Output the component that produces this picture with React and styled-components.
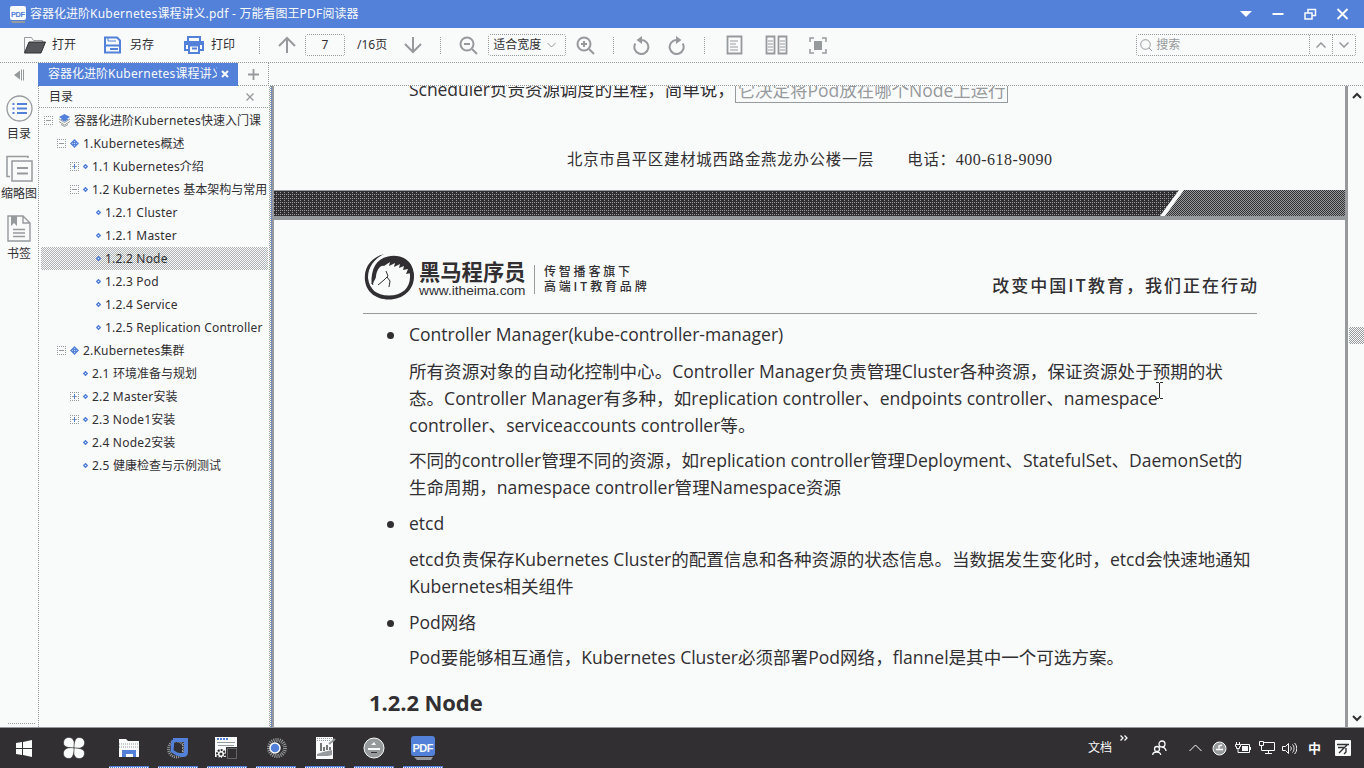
import React from "react";
import styled, { createGlobalStyle, css } from "styled-components";

const C = { bg: "#f9fbfa", ink: "#312f32", gray: "#979a9d", blue: "#5380d8" };
const dotsX = `repeating-linear-gradient(90deg, ${C.gray} 0 1px, transparent 1px 2px)`;
const dotsY = `repeating-linear-gradient(180deg, ${C.gray} 0 1px, transparent 1px 2px)`;
const checker = (a, b) => `repeating-conic-gradient(${a} 0 25%, ${b} 0 50%) 0 0 / 2px 2px`;

const Global = createGlobalStyle`
  * { box-sizing: border-box; }
  body { margin: 0; background: ${C.bg}; color: ${C.ink}; font: 12px/16px "Noto Sans", "Noto Sans CJK SC", sans-serif; overflow: hidden; }
  svg { display: block; flex: none; }
`;
const Window = styled.div`width: 1364px; height: 768px; display: flex; flex-direction: column; background: ${C.bg}; white-space: nowrap; overflow: hidden;`;
const TitleBar = styled.header`height: 28px; flex: none; display: flex; align-items: center; background: ${C.blue}; color: ${C.bg}; padding: 0 13px 0 9px;`;
const Title = styled.span`margin-left: 4px; flex: 1;`;
const WindowButtons = styled.div`display: flex; gap: 16px;`;
const Toolbar = styled.div`height: 35px; flex: none; display: flex; align-items: center; padding: 0 8px 1px 23px; background: ${dotsX} 0 34px / 100% 1px no-repeat;`;
const ToolButton = styled.div`display: flex; align-items: center; gap: ${p => p.$gap || 6}px; width: ${p => p.$w}px; flex: none;`;
const Separator = styled.i`width: 1px; height: 17px; background: ${dotsY}; margin: 0 ${p => p.$r}px 0 ${p => p.$l}px; flex: none;`;
const Field = styled.div`height: 22px; width: ${p => p.$w}px; flex: none; display: flex; align-items: center; border-radius: 3px; background: ${dotsX} 0 0 / 100% 1px no-repeat, ${dotsX} 0 100% / 100% 1px no-repeat, ${dotsY} 0 0 / 1px 100% no-repeat, ${dotsY} 100% 0 / 1px 100% no-repeat; ${p => p.$center && css`justify-content: center;`} padding: 0 ${p => p.$pad || 1}px; margin-left: ${p => p.$ml || 0}px;`;
const Gap = styled.i`width: ${p => p.$w}px; flex: none;`;
const Placeholder = styled.span`color: ${C.gray}; margin-left: 4px; flex: 1;`;
const Stepper = styled.div`height: 20px; width: 23px; display: grid; place-items: center; background: ${dotsY} 0 0 / 1px 100% no-repeat;`;
const TabRow = styled.div`height: 23px; flex: none; display: flex; background: ${dotsX} 0 22px / 100% 1px no-repeat;`;
const Collapse = styled.div`width: 38px; display: grid; place-items: center; background: ${C.bg};`;
const Tab = styled.div`width: 200px; background: ${C.blue}; color: ${C.bg}; display: flex; align-items: center; padding: 0 9px 2px 10px; justify-content: space-between;`;
const TabText = styled.span`width: 169px; overflow: hidden;`;
const NewTab = styled.div`width: 31px; display: grid; place-items: center; padding-bottom: 1px; background: ${dotsY} 30px 0 / 1px 100% no-repeat;`;
const Body = styled.main`height: 641px; flex: none; display: flex;`;
const Rail = styled.nav`width: 39px; flex: none; background: ${dotsY} 38px 0 / 1px 100% no-repeat; display: flex; flex-direction: column; align-items: flex-start; padding-top: 9px;`;
const RailItem = styled.div`width: 38px; height: 60px; display: flex; flex-direction: column; align-items: center; gap: 4px; span { line-height: 16px; }`;
const RailGrip = styled.i`width: 27px; height: 1px; margin: auto 0 3px 8px; background: ${dotsX};`;
const Outline = styled.aside`width: 230px; flex: none; display: flex; flex-direction: column;`;
const OutlineHead = styled.div`height: 23px; flex: none; display: flex; align-items: center; justify-content: space-between; padding: 0 15px 2px 10px; background: ${dotsX} 0 21px / 100% 1px no-repeat;`;
const TreeRow = styled.div`height: 23px; display: flex; align-items: center; padding-left: ${p => p.$indent}px; margin: 0 1px 0 2px; overflow: hidden; ${p => p.$on && css`background: ${checker("#aeb1b3", C.bg)};`}`;
const TreeBox = styled.svg`margin-right: ${p => p.$r}px;`;
const TreeText = styled.span`margin-left: ${p => p.$ml}px;`;
const Latin = styled.span`letter-spacing: ${p => p.$ls}px;`;
const Splitter = styled.i`width: 5px; flex: none; background: linear-gradient(90deg, transparent 3px, ${C.gray} 3px), repeating-linear-gradient(180deg, ${C.blue} 0 1px, ${C.gray} 1px 2px) 2px 0 / 1px 100% no-repeat, ${checker(C.gray, C.bg)};`;
const Viewer = styled.section`width: 1071px; flex: none; height: 641px; overflow: hidden; display: flex; flex-direction: column;`;
const PageEnd = styled.div`height: 130px; flex: none; overflow: hidden;`;
const PageNext = styled.article`border-top: 4px solid ${C.gray}; flex: 1; overflow: hidden; padding-left: 89px;`;
const docFont = css`font: 17.56px/27px "Open Sans", "Noto Sans CJK SC", sans-serif;`;
const ClippedLine = styled.div`${docFont} height: 27px; margin: -10px 0 0 135px; display: flex; letter-spacing: -.07px;`;
const Quote = styled.span`border: 1px solid ${C.gray}; color: ${C.gray}; padding: 0 2px; width: 273px; height: 27px; line-height: 26px;`;
const Address = styled.div`font: 15.4px/20px "Liberation Serif", "Noto Sans CJK SC", serif; margin: 47px 0 0 293px; display: flex; gap: 33px; letter-spacing: .78px;`;
const Phone = styled.span`letter-spacing: .5px; font-size: 16px;`;
const Band = styled.svg`margin-top: 20px;`;
const DocHeader = styled.header`width: 894px; height: 94px; border-bottom: 1px solid ${C.gray}; display: flex; padding: 33px 0 0 1px;`;
const Brand = styled.div`margin-left: 4px; width: 116px; border-right: 1px solid ${C.gray}; height: 29px; margin-top: 12px;`;
const BrandName = styled.div`font: bold 21.3px/22px "Noto Sans CJK SC", sans-serif; margin-top: -5px;`;
const BrandUrl = styled.div`font: 13.7px/14px "Liberation Sans", sans-serif; margin-top: 2px;`;
const BrandNote = styled.div`font: 500 12px/15px "Noto Sans CJK SC", sans-serif; margin: 10px 0 0 9px; flex: 1; letter-spacing: 2.8px;`;
const Slogan = styled.div`font: 500 17px/24px "Noto Sans CJK SC", sans-serif; letter-spacing: 2px; margin: 20px -2px 0 0;`;
const Block = styled.div`${docFont} margin: ${p => p.$mt}px 0 0 46px; position: relative;`;
const Bullet = styled.i`float: left; width: 7px; height: 7px; border-radius: 50%; background: ${C.ink}; margin: 11px 0 0 -22px;`;
const Line = styled.div`height: 27px;`;
const Heading = styled.h2`font: bold 22px/30px "Open Sans", sans-serif; margin: 16px 0 0 6px; letter-spacing: -.08px;`;
const ScrollTrack = styled.div`width: 19px; border-left: 3px solid ${C.gray}; flex: none; display: flex; flex-direction: column; align-items: flex-end; padding: 6px 0 5px;`;
const ScrollThumb = styled.i`width: 15px; height: 17px; margin: 228px 0 auto; background: ${checker(C.gray, C.bg)};`;
const Taskbar = styled.footer`height: 41px; flex: none; border-top: 1px solid ${C.gray}; background: ${C.ink}; color: ${C.bg}; display: flex; align-items: stretch;`;
const Task = styled.div`width: 40px; margin-left: ${p => p.$ml}px; flex: none; display: grid; place-items: center; ${p => p.$open && css`background: ${dotsX.replace(C.gray, C.bg)} 0 100% / 100% 1px no-repeat, linear-gradient(${C.blue}, ${C.blue}) 0 100% / 100% 2px no-repeat;`}`;
const Tray = styled.div`display: flex; align-items: center; margin-left: auto; padding-right: 13px;`;
const TrayText = styled.span`margin-left: ${p => p.$ml || 0}px; font-size: ${p => p.$size || 12}px; font-weight: ${p => p.$bold ? 700 : 400};`;
const TrayIcon = styled.svg`margin-left: ${p => p.$ml}px; margin-top: ${p => p.$mt || 0}px;`;
const Cursor = styled.svg`position: absolute; left: 746px; top: 24px;`;
const IconText = styled.text`font-family: "Liberation Sans", sans-serif; font-weight: 700;`;

const S = ({ w, h, s = C.gray, sw = 1, f = "none", children }) => (
  <svg width={w} height={h} viewBox={`0 0 ${w} ${h}`} fill={f} stroke={s} strokeWidth={sw}>{children}</svg>
);
const Mixed = ({ text, ls }) => text.split(/([ -~]+)/).map((t, i) => (i % 2 ? <Latin key={i} $ls={ls}>{t}</Latin> : t));

const ZoomIcon = ({ plus }) => (
  <S w={19} h={19} sw={2}><circle cx="8" cy="8" r="6.500" /><path d="M13 13l5 5M5 8h6" />{plus && <path d="M8 5v6" />}</S>
);
const RotateIcon = ({ flip }) => (
  <S w={17} h={19} sw={2}><g transform={flip ? "matrix(-1 0 0 1 17 0)" : undefined}><path d="M2.300 7.500A7 7 0 1 0 8.500 4H6" /><path d="M9 0v8L3.500 4z" fill={C.gray} stroke="none" /></g></S>
);

const ROWS = [
  [0, "-", "容器化进阶Kubernetes快速入门课"], [1, "-", "1.Kubernetes概述"], [2, "+", "1.1 Kubernetes介绍"],
  [2, "-", "1.2 Kubernetes 基本架构与常用"], [3, "", "1.2.1 Cluster"], [3, "", "1.2.1 Master"], [3, "", "1.2.2 Node", true],
  [3, "", "1.2.3 Pod"], [3, "", "1.2.4 Service"], [3, "", "1.2.5 Replication Controller"], [1, "-", "2.Kubernetes集群"],
  [2, "", "2.1 环境准备与规划"], [2, "+", "2.2 Master安装"], [2, "+", "2.3 Node1安装"], [2, "", "2.4 Node2安装"], [2, "", "2.5 健康检查与示例测试"],
];
const LEVEL = [{ box: 3, icon: 5, ml: 3 }, { box: 16, icon: 4, ml: 4 }, { box: 29, icon: 4, ml: 4 }, { box: 42, icon: 4, ml: 4 }];

function TreeItem({ row: [level, mark, text, on] }) {
  const l = LEVEL[level];
  return (
    <TreeRow $on={on} $indent={l.box}>
      <TreeBox width="9" height="9" $r={l.icon} fill="none" stroke={C.gray} shapeRendering="crispEdges">
        {mark && <><path d="M0 .5h9M0 8.500h9M.5 2v6M8.500 2v6" strokeDasharray="1 1" /><path d="M2 4.500h5" />{mark === "+" && <path d="M4.500 2v5" stroke={C.blue} />}</>}
      </TreeBox>
      {level === 0 && <S w={13} h={13} f={C.blue} s="none"><path d="M6.500 0L12 3 6.500 6.500 1 3z" /><path d="M1 5l5.500 3.500L12 5M1 7.500l5.500 3.500L12 7.500M3 10.500l3.500 2 3.500-2" fill="none" stroke={C.gray} /><path d="M3 5l3.500 2 3.500-2" stroke={C.blue} /></S>}
      {level === 1 && <S w={9} h={9} f={C.blue} s="none"><path d="M4.500 0L9 4.500 4.500 9 0 4.500z" /><path d="M4.500 2v5M2 4.500h5" stroke={C.bg} strokeWidth=".6" strokeDasharray="1 1" /></S>}
      {level > 1 && <S w={5} h={5} s={C.blue} sw={1.4}><path d="M2.500 .7l1.800 1.800-1.800 1.800L.7 2.500z" /></S>}
      <TreeText $ml={l.ml}><Mixed text={text} ls={0.2} /></TreeText>
    </TreeRow>
  );
}

const Doc = () => (
  <Viewer>
    <PageEnd>
      <ClippedLine>Scheduler负责资源调度的里程，简单说，<Quote>它决定将Pod放在哪个Node上运行</Quote></ClippedLine>
      <Address><span>北京市昌平区建材城西路金燕龙办公楼一层</span><span>电话：<Phone>400-618-9090</Phone></span></Address>
      <Band width="1071" height="26">
        <defs>
          <pattern id="dark" width="4" height="4" patternUnits="userSpaceOnUse"><path d="M0 0h4v4H0z" fill={C.ink} /><path d="M0 0h1v1H0zM2 2h1v1H2zM2 0h1v1H2z" fill={C.gray} /></pattern>
          <pattern id="mid" width="2" height="2" patternUnits="userSpaceOnUse"><path d="M0 0h2v2H0z" fill={C.gray} /><path d="M0 0h1v1H0zM1 1h1v1H1z" fill={C.ink} /></pattern>
        </defs>
        <path d="M0 0h905l-19 26H0z" fill="url(#dark)" /><path d="M0 .5h905" stroke={C.gray} />
        <path d="M910 0h161v26H891z" fill="url(#mid)" />
      </Band>
    </PageEnd>
    <PageNext>
      <DocHeader>
        <S w={51} h={48} s={C.ink}>
          <path d="M20 1C9 4 .8 12 .8 24.500 .8 38 11 46.500 25 46.500S50 37 50 23.500C50 18 48.500 14 46 11l-1 7c1 2 1 4 1 6 0 11-8 18.500-21 18.500S5.500 36 4 25C4 14 10 6 20 1z" fill={C.ink} stroke="none" />
          <path d="M7.500 31C7 16 12 6 24 3.500 35 1 45 6 48 14l2 9-3-3-5 1 2-5-5 1 1-4-5 2 1-4-6 3 1-4-6 3 1-4-6 4C16 12 13 17 12 23c0 3-2 4-3 8z" fill={C.ink} stroke="none" />
          <path d="M8 30l1 2M22 18l2 5-4 4-6 5M23 24l3 4-1 6" strokeWidth="1" />
        </S>
        <Brand><BrandName>黑马程序员</BrandName><BrandUrl>www.itheima.com</BrandUrl></Brand>
        <BrandNote>传智播客旗下<br />高端IT教育品牌</BrandNote>
        <Slogan>改变中国IT教育，我们正在行动</Slogan>
      </DocHeader>
      <Block $mt={7}><Bullet /><Line>Controller Manager(kube-controller-manager)</Line></Block>
      <Block $mt={10}>
        <Line>所有资源对象的自动化控制中心。Controller Manager负责管理Cluster各种资源，保证资源处于预期的状</Line>
        <Line>态。Controller Manager有多种，如replication controller、endpoints controller、namespace</Line>
        <Line>controller、serviceaccounts controller等。</Line>
        <Cursor width="9" height="17" stroke={C.ink}><path d="M1 .5h3M5 .5h3M4.500 1v15M1 16.500h3M5 16.500h3" /></Cursor>
      </Block>
      <Block $mt={8}>
        <Line>不同的controller管理不同的资源，如replication controller管理Deployment、StatefulSet、DaemonSet的</Line>
        <Line>生命周期，namespace controller管理Namespace资源</Line>
      </Block>
      <Block $mt={9}><Bullet /><Line>etcd</Line></Block>
      <Block $mt={9}>
        <Line>etcd负责保存Kubernetes Cluster的配置信息和各种资源的状态信息。当数据发生变化时，etcd会快速地通知</Line>
        <Line>Kubernetes相关组件</Line>
      </Block>
      <Block $mt={9}><Bullet /><Line>Pod网络</Line></Block>
      <Block $mt={8}><Line>Pod要能够相互通信，Kubernetes Cluster必须部署Pod网络，flannel是其中一个可选方案。</Line></Block>
      <Heading>1.2.2 Node</Heading>
    </PageNext>
  </Viewer>
);

const TaskIcons = [
  <S w={16} h={17} f={C.bg} s="none"><path d="M0 3l6-1v6H0zM7 2l9-2v8H7zM0 9h6v6l-6-1zM7 9h9v8l-9-2z" /></S>,
  <S w={22} h={22} f={C.bg} s={C.ink} sw={0.6}><path d="M11 11C7 11 .5 10.500 .5 6S4 0 7 .5c4 1 5 5.500 4 10.500z" /><path d="M11 11c0-4 .5-10.500 5-10.500S22 4 21.500 7c-1 4-5.500 5-10.500 4z" /><path d="M11 11c4 0 10.500 .5 10.500 5s-3.500 6-6.500 5.500c-4-1-5-5.500-4-10.500z" /><path d="M11 11c0 4-.5 10.500-5 10.500S0 18 .5 15c1-4 5.500-5 10.500-4z" /></S>,
  <S w={22} h={19} s="none"><path d="M1 0h7l2 2h11v16H1z" fill={C.bg} /><path d="M1 5h20M1 8h20" stroke={C.gray} strokeDasharray="1 1" /><path d="M4 11h14v7h-3v-3H8v3H4z" fill={C.blue} /></S>,
  <S w={23} h={22} s={C.gray}><circle cx="9.500" cy="12" r="8" strokeWidth="3" strokeDasharray="1 1" /><path d="M6 3l13 0v12q0 3-3 3h-3" stroke={C.blue} strokeWidth="4" /><path d="M6 3l-1 11 5 3 4 1" stroke={C.blue} strokeWidth="3" /><path d="M8 6l8 2v8l-6-2z" fill={C.ink} stroke="none" /><path d="M15.500 7v8" strokeDasharray="2 1" /></S>,
  <S w={24} h={23} s="none"><path d="M0 0h22v20H0z" fill={C.bg} /><path d="M2 2h11" stroke={C.blue} strokeWidth="2" strokeDasharray="2 1" /><path d="M2 5.500h18M3 8.500h16" stroke={C.gray} /><path d="M11 10h12v13H11z" fill={C.ink} /><path d="M12.500 11.500h9v10h-9z" stroke={C.gray} strokeDasharray="1 1" /><circle cx="6" cy="17" r="4" fill={C.bg} stroke={C.ink} strokeWidth="2" strokeDasharray="2 1" /><circle cx="6" cy="17" r="1.500" fill={C.ink} /></S>,
  <S w={22} h={22} s={C.gray}><circle cx="12" cy="11" r="8" strokeWidth="4" strokeDasharray="1 1" /><circle cx="10" cy="11" r="5" fill={C.blue} stroke={C.bg} strokeWidth="1.500" /></S>,
  <S w={21} h={24} s="none"><path d="M1 1h17v22H1z" fill={C.bg} /><path d="M2 2.500h15M2 4.500h13" stroke={C.gray} strokeDasharray="1 1" /><path d="M6 7v8M9 11v4M12 9v5M15 11v3" stroke={C.ink} strokeWidth="1.300" /><path d="M2 18l6-2 9-2v5l-4 1H2z" fill={C.gray} /><path d="M14 8l6-5" stroke={C.gray} strokeWidth="2" /></S>,
  <S w={22} h={22} s="none"><circle cx="11" cy="11" r="10" fill={C.gray} stroke={C.bg} /><path d="M8 8l3-3 2 3zM5 11h12v2H5z" fill={C.bg} /><path d="M8 15.500h6" stroke={C.ink} /></S>,
  <S w={24} h={24} s="none"><rect width="24" height="20" rx="3" fill={C.blue} /><path d="M3 21h19l-2 3H6z" fill={C.gray} /><IconText x="1.500" y="15.500" fontSize="11" fill={C.bg} textLength="21">PDF</IconText></S>,
];
const TASK_ML = [4, 10, 15, 9, 9, 9, 9, 9, 9];

export default function App() {
  return (
    <Window>
      <Global />
      <TitleBar>
        <S w={17} h={17} s="none"><rect x="1" width="16" height="14" rx="2" fill={C.bg} /><path d="M2 15h14v2H3z" fill={C.gray} /><IconText x="2" y="10.500" fontSize="7.500" fill={C.blue} textLength="14">PDF</IconText></S>
        <Title><Mixed text="容器化进阶Kubernetes课程讲义.pdf - 万能看图王PDF阅读器" ls={0.25} /></Title>
        <WindowButtons>
          <S w={16} h={12} s="none"><path d="M1 3h12L7 9z" fill={C.bg} /></S>
          <S w={16} h={12} s={C.bg} sw={2}><path d="M1.500 6h11" /></S>
          <S w={16} h={12} s={C.bg} sw={1.500}><path d="M2 5h7v6H2zM5 4.500V1.500h7.500v6h-3" /></S>
          <S w={16} h={12} s={C.bg} sw={2}><path d="M2.500 1l10 10M12.500 1L2.500 11" /></S>
        </WindowButtons>
      </TitleBar>
      <Toolbar>
        <ToolButton $w={80}><S w={23} h={18} s={C.ink}><path d="M1.500 16V1.500h7l2 3h9V6" stroke={C.gray} /><path d="M1.500 17L6 6h16.500L18 17z" fill="#55565a" /></S>打开</ToolButton>
        <ToolButton $w={81} $gap={8}><S w={19} h={18} s={C.blue} sw={2}><path d="M2 1.500h12l3 3v12H2zM1 9.500h17M7 13h8" /><path d="M5 2v3h8" strokeWidth="1" /></S>另存</ToolButton>
        <ToolButton $w={75} $gap={7}><S w={20} h={18} s={C.blue} sw={2}><path d="M4 5V1h12v4M4 14H1V6h18v8h-3" /><path d="M5 9.500h10V17H5zM8 12.500h5" /><path d="M1 6h18v3H1z" fill={C.blue} stroke="none" /></S>打印</ToolButton>
        <Separator $l={0} $r={18} />
        <S w={18} h={18} sw={2}><path d="M9 17V2M1 10l8-8 8 8" /></S>
        <Field $w={40} $ml={9} $center>7</Field>
        <Gap $w={12} /><span>/16页</span><Gap $w={17} />
        <S w={18} h={18} sw={2}><path d="M9 1v15M1 8l8 8 8-8" /></S>
        <Separator $l={18} $r={18} />
        <ZoomIcon />
        <Field $w={78} $ml={10} $pad={5}>适合宽度<Gap $w={6} /><S w={9} h={6}><path d="M.5 1l4 4 4-4" /></S></Field>
        <Gap $w={10} /><ZoomIcon plus />
        <Separator $l={18} $r={19} /><RotateIcon /><Gap $w={18} /><RotateIcon flip />
        <Separator $l={19} $r={21} />
        <S w={17} h={20} sw={1.800}><path d="M1.500 1.500h14v17h-14z" /><path d="M4 6h8M4 9h6M4 12h8M4 15h8" strokeWidth="1" /></S><Gap $w={22} />
        <S w={23} h={20} sw={1.800}><path d="M1.500 1.500h8v17h-8zM13.500 1.500h8v17h-8z" /><path d="M3 6h5M3 9h5M3 12h5M3 15h5M15 6h5M15 9h5M15 12h5M15 15h5" strokeWidth="1" /></S><Gap $w={21} />
        <S w={18} h={17}><path d="M1 5V1h4M13 1h4v4M17 12v4h-4M5 16H1v-4" strokeWidth="1.500" /><path d="M5 4h8v9H5z" fill={C.gray} stroke="none" /></S>
        <Field $w={220} $ml={309}>
          <Gap $w={3} /><S w={12} h={12}><circle cx="5.500" cy="5.500" r="4.800" /><path d="M9 9l3 3" /></S><Placeholder>搜索</Placeholder>
          <Stepper><S w={10} h={6} sw={1.500}><path d="M.5 5.500l4.500-4.500 4.500 4.500" /></S></Stepper>
          <Stepper><S w={10} h={6} sw={1.500}><path d="M.5 .5l4.500 4.500 4.500-4.500" /></S></Stepper>
        </Field>
      </Toolbar>
      <TabRow>
        <Collapse><S w={11} h={12} s="none"><path d="M0 6l6-4.500v9z" fill={C.gray} /><path d="M7 .5h1v11H7zM9 .5h1v11H9z" fill={C.gray} /></S></Collapse>
        <Tab><TabText><Mixed text="容器化进阶Kubernetes课程讲义" ls={0.25} /></TabText><S w={8} h={8} s={C.bg} sw={2}><path d="M1 1l6 6M7 1L1 7" /></S></Tab>
        <NewTab><S w={11} h={11} sw={1.800}><path d="M5.500 0v11M0 5.500h11" /></S></NewTab>
      </TabRow>
      <Body>
        <Rail>
          <RailItem><S w={27} h={27}><circle cx="13.500" cy="13.500" r="12.500" strokeWidth="1.300" /><path d="M11 9h10M11 13.500h10M11 18h10M6.500 9h2M6.500 13.500h2M6.500 18h2" stroke={C.blue} strokeWidth="2" /></S><span>目录</span></RailItem>
          <RailItem><S w={27} h={27} sw={1.500}><path d="M22 3V1.500H1v20h3" /><path d="M6 6h20v20H6z" /><path d="M11 13h11M11 18.500h11" strokeWidth="2" /></S><span>缩略图</span></RailItem>
          <RailItem><S w={24} h={27} sw={1.400}><path d="M1 1h15l7 7v18H1zM16 1v7h7" /><path d="M4 1h6v10L7 8l-3 3z" fill={C.gray} stroke="none" /><path d="M6 14.500h12M6 18h12M6 21.500h12" /></S><span>书签</span></RailItem>
          <RailGrip />
        </Rail>
        <Outline>
          <OutlineHead>目录<S w={8} h={8}><path d="M.5 .5l7 7M7.500 .5l-7 7" strokeWidth="1.400" /></S></OutlineHead>
          {ROWS.map((r, i) => <TreeItem key={i} row={r} />)}
        </Outline>
        <Splitter />
        <Doc />
        <ScrollTrack>
          <S w={13} h={7} s={C.ink} sw={2}><path d="M2 6l4-4 4 4" /></S>
          <ScrollThumb />
          <S w={13} h={7} s={C.ink} sw={2}><path d="M2 1l4 4 4-4" /></S>
        </ScrollTrack>
      </Body>
      <Taskbar>
        {TaskIcons.map((icon, i) => <Task key={i} $ml={TASK_ML[i]} $open={i > 1}>{icon}</Task>)}
        <Tray>
          <TrayText>文档</TrayText>
          <TrayIcon $ml={8} $mt={-21} width="8" height="6" fill="none" stroke={C.bg} strokeWidth="1.300"><path d="M.5 .5L3 3 .5 5.500M4.500 .5L7 3 4.500 5.500" /></TrayIcon>
          <TrayIcon $ml={24} width="15" height="16" fill="none" stroke={C.bg} strokeWidth="1.300"><circle cx="10" cy="4" r="3" /><circle cx="5" cy="9" r="2.500" /><path d="M10 7c2 0 4 2 4 4M.7 15c0-4 8-4 8 0" /></TrayIcon>
          <TrayIcon $ml={22} width="13" height="8" fill="none" stroke={C.bg}><path d="M.5 7l6-6 6 6" /></TrayIcon>
          <TrayIcon $ml={10} width="15" height="15" fill={C.gray} stroke={C.bg}><circle cx="7.500" cy="7.500" r="6.500" /><path d="M7 7.500V5l3-1M4 8.500h7" strokeWidth="1.400" /></TrayIcon>
          <TrayIcon $ml={8} width="16" height="12" fill="none" stroke={C.bg}><path d="M6 2.500h8.500v8H5" /><path d="M7 4h6v5H7zM15 5h1v3h-1z" fill={C.bg} stroke="none" /><path d="M1.500 0v2M4.500 0v2M.5 2.500h5v2h-1v2h-3v-2h-1zM3 6v4.500h2" /></TrayIcon>
          <TrayIcon $ml={8} width="16" height="14" fill="none" stroke={C.bg}><path d="M5 1.500h10.500v8h-13V5M6 12.500h7M9.500 10v2M.5 .5h4v4h-4z" /></TrayIcon>
          <TrayIcon $ml={7} width="15" height="13" fill="none" stroke={C.bg}><path d="M.5 4.500h3l3-3v10l-3-3h-3zM8.500 4.500c1 1 1 3 0 4M10.500 2.500c2 2 2 6 0 8M12.500 1c3 3 3 8 0 11" /></TrayIcon>
          <TrayText $ml={11} $size={13} $bold>中</TrayText>
          <TrayIcon $ml={14} width="16" height="16" fill="none"><rect width="16" height="16" rx="1" fill={C.bg} /><path d="M2 4.500h12M3 7.500h7M12 5L7 10l-3 3M11 8v4l-2 2" stroke={C.ink} strokeWidth="1.400" /></TrayIcon>
        </Tray>
      </Taskbar>
    </Window>
  );
}
